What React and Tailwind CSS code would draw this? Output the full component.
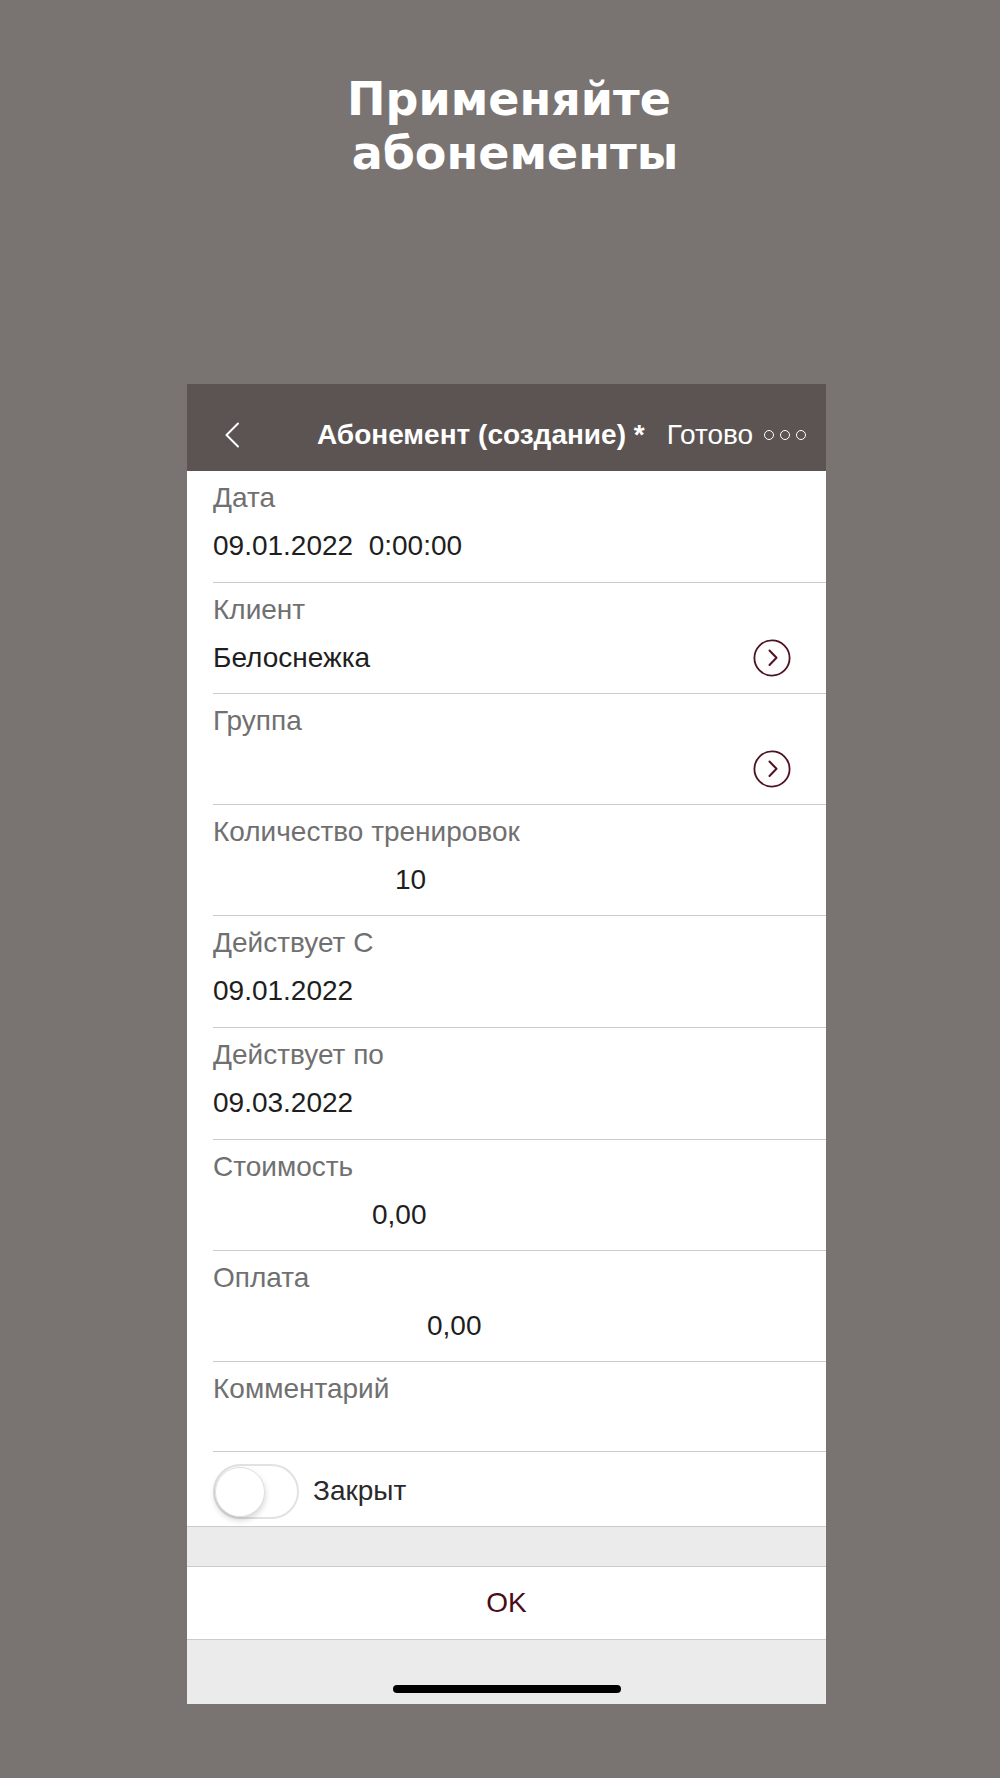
const rows = [
  { label: 'Дата', value: '09.01.2022\u00a0\u00a00:00:00', h: 'h-[112px]' },
  { label: 'Клиент', value: 'Белоснежка', h: 'h-[111px]', link: true },
  { label: 'Группа', value: '', h: 'h-[111px]', link: true },
  { label: 'Количество тренировок', value: '10', h: 'h-[111px]', indent: 'pl-[182px]' },
  { label: 'Действует С', value: '09.01.2022', h: 'h-[112px]' },
  { label: 'Действует по', value: '09.03.2022', h: 'h-[112px]' },
  { label: 'Стоимость', value: '0,00', h: 'h-[111px]', indent: 'pl-[159px]' },
  { label: 'Оплата', value: '0,00', h: 'h-[111px]', indent: 'pl-[214px]' },
];

function CircleArrow() {
  return (
    <svg width="38" height="38" viewBox="0 0 38 38" fill="none">
      <circle cx="19" cy="19" r="17.6" stroke="#4f1220" strokeWidth="1.8" />
      <path d="M16.5 11.5 L23.5 18.8 L16.5 26" stroke="#4f1220" strokeWidth="2" strokeLinecap="round" strokeLinejoin="round" />
    </svg>
  );
}

function Field({ label, value, h, link, indent }) {
  return (
    <div className="pl-[26px]">
      <div className={`${h} border-b border-[#cbcbcb] flex flex-col pr-[35px]`}>
        <div className="pt-[12px] text-[28px] leading-[30px] text-[#707070]">{label}</div>
        <div className="mt-[14px] h-[38px] flex items-center justify-between">
          <span className={`text-[28px] leading-[34px] text-[#1e1e1e] ${indent || ''}`}>{value}</span>
          {link && <CircleArrow />}
        </div>
      </div>
    </div>
  );
}

export default function App() {
  return (
    <div className="min-h-[1778px] w-full bg-[#797372] font-['Liberation_Sans',Arial,sans-serif]">
      {/* Caption */}
      <div className="pt-[72px] pl-[18px] text-center text-white font-['DejaVu_Sans',sans-serif] font-bold text-[46px] leading-[54px]">
        <div>Применяйте</div>
        <div className="pl-[12px]">абонементы</div>
      </div>

      {/* Phone screen */}
      <div className="mt-[204px] ml-[187px] w-[639px] bg-white">
        <div className="h-[87px] bg-[#5b5452] flex items-center pl-[37px] pt-[14px] text-white">
          <svg width="16" height="26" viewBox="0 0 16 26" fill="none">
            <path d="M14 1.5 L2.5 13 L14 24.5" stroke="white" strokeWidth="2" strokeLinecap="round" strokeLinejoin="round" />
          </svg>
          <span className="ml-[77px] text-[28px] font-bold">Абонемент (создание) *</span>
          <span className="ml-[22px] text-[28px]">Готово</span>
          <span className="ml-[11px] flex items-center gap-[6px]">
            <span className="w-[10px] h-[10px] rounded-full border-[1.8px] border-white" />
            <span className="w-[10px] h-[10px] rounded-full border-[1.8px] border-white" />
            <span className="w-[10px] h-[10px] rounded-full border-[1.8px] border-white" />
          </span>
        </div>

        {rows.map((r) => (
          <Field key={r.label} {...r} />
        ))}

        <div className="pl-[26px]">
          <div className="h-[90px] border-b border-[#cbcbcb] pt-[12px] text-[28px] leading-[30px] text-[#707070]">
            Комментарий
          </div>
        </div>

        <div className="h-[74px] pl-[26px] flex items-center pt-[4px] gap-[14px]">
          <div className="relative w-[86px] h-[55px] rounded-full border-2 border-[#e2e2e2] bg-white">
            <div className="absolute left-0 top-[1px] w-[50px] h-[50px] rounded-full bg-white border border-[#e0e0e0] shadow-[0_3px_6px_rgba(0,0,0,0.18)]" />
          </div>
          <span className="text-[28px] text-[#2a2a2a]">Закрыт</span>
        </div>

        <div className="h-[41px] bg-[#ebebeb] border-t border-b border-[#cbcbcb]" />

        <div className="h-[72px] flex items-center justify-center text-[28px] text-[#4a0c18]">OK</div>

        <div className="h-[65px] bg-[#ebebeb] border-t border-[#cbcbcb] flex justify-center pt-[45px]">
          <div className="w-[228px] h-[8px] rounded-full bg-black" />
        </div>
      </div>
    </div>
  );
}
